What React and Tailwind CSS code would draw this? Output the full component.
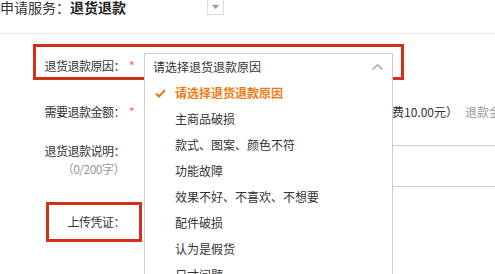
const reasons = [
  '主商品破损',
  '款式、图案、颜色不符',
  '功能故障',
  '效果不好、不喜欢、不想要',
  '配件破损',
  '认为是假货',
  '尺寸问题',
  '其他',
]

function Star() {
  return <span className="w-[19px] shrink-0 pl-[4px] text-[#f4623a]">*</span>
}

export default function App() {
  return (
    <div
      className="relative w-[495px] h-[274px] overflow-hidden bg-white text-[12px] leading-[18px] text-[#333]"
      style={{ fontFamily: '"Noto Sans CJK SC", "Noto Sans", sans-serif' }}
    >
      {/* Service header */}
      <div className="h-[34px] border-b border-[#e4e4e4] flex items-start">
        <div className="w-[207px] shrink-0 text-[14px] leading-[14px] whitespace-nowrap">
          申请服务：<span className="font-bold text-[#222]">退货退款</span>
        </div>
        <div className="w-[17px] h-[16px] -mt-[1px] border border-[#dcdcdc] flex items-center justify-center">
          <svg width="7" height="4" viewBox="0 0 7 4">
            <path d="M0 0 L7 0 L3.5 4 Z" fill="#999" />
          </svg>
        </div>
      </div>

      {/* Reason row */}
      <div className="mt-[10px] ml-[33px] w-[371px] h-[36px] border-[3px] border-[#d3301c] flex">
        <div className="w-[89px] shrink-0 pt-[10px] text-right whitespace-nowrap tracking-[-0.5px]">退货退款原因：</div>
        <div className="pt-[10px]">
          <Star />
        </div>
      </div>

      {/* Amount row */}
      <div className="mt-[23px] flex whitespace-nowrap">
        <div className="w-[125px] shrink-0 text-right tracking-[-0.5px]">需要退款金额：</div>
        <Star />
        <div className="w-[212px] shrink-0" />
        <div className="w-[109px] shrink-0">（含运费10.00元）</div>
        <div className="shrink-0 text-[#999]">退款金额将原路退回</div>
      </div>

      {/* Description row */}
      <div className="mt-[21px] flex">
        <div className="w-[125px] shrink-0 text-right whitespace-nowrap tracking-[-0.5px]">
          <div>退货退款说明：</div>
          <div className="text-[#999]">（0/200字）</div>
        </div>
        <div className="w-[19px] shrink-0" />
        <div className="mt-[3px] w-[400px] h-[42px] border border-[#ccc] shrink-0" />
      </div>

      {/* Upload row */}
      <div className="mt-[15px] ml-[46px] w-[96px] h-[40px] border-[3px] border-[#d3301c] flex items-center justify-end pr-[14px] whitespace-nowrap tracking-[-0.5px]">
        上传凭证：
      </div>

      {/* Open select */}
      <div className="absolute left-[144px] top-[53px] w-[249px] bg-white border border-[#ccc]">
        <div className="h-[26px] pl-[8px] pr-[9px] flex items-center justify-between">
          <span>请选择退货退款原因</span>
          <svg width="11" height="6" viewBox="0 0 11 6">
            <path d="M0.5 5.5 L5.5 0.8 L10.5 5.5" fill="none" stroke="#999" strokeWidth="1.2" />
          </svg>
        </div>
        <div className="h-[26px] pl-[10px] flex items-center font-bold text-[#f07a10]">
          <svg width="11" height="9" viewBox="0 0 11 9" className="mr-[9px]">
            <path d="M1 4.5 L4 7.5 L10 1" fill="none" stroke="#f07a10" strokeWidth="2" />
          </svg>
          请选择退货退款原因
        </div>
        {reasons.map((r) => (
          <div key={r} className="h-[26px] pl-[30px] flex items-center whitespace-nowrap">
            {r}
          </div>
        ))}
      </div>
    </div>
  )
}
